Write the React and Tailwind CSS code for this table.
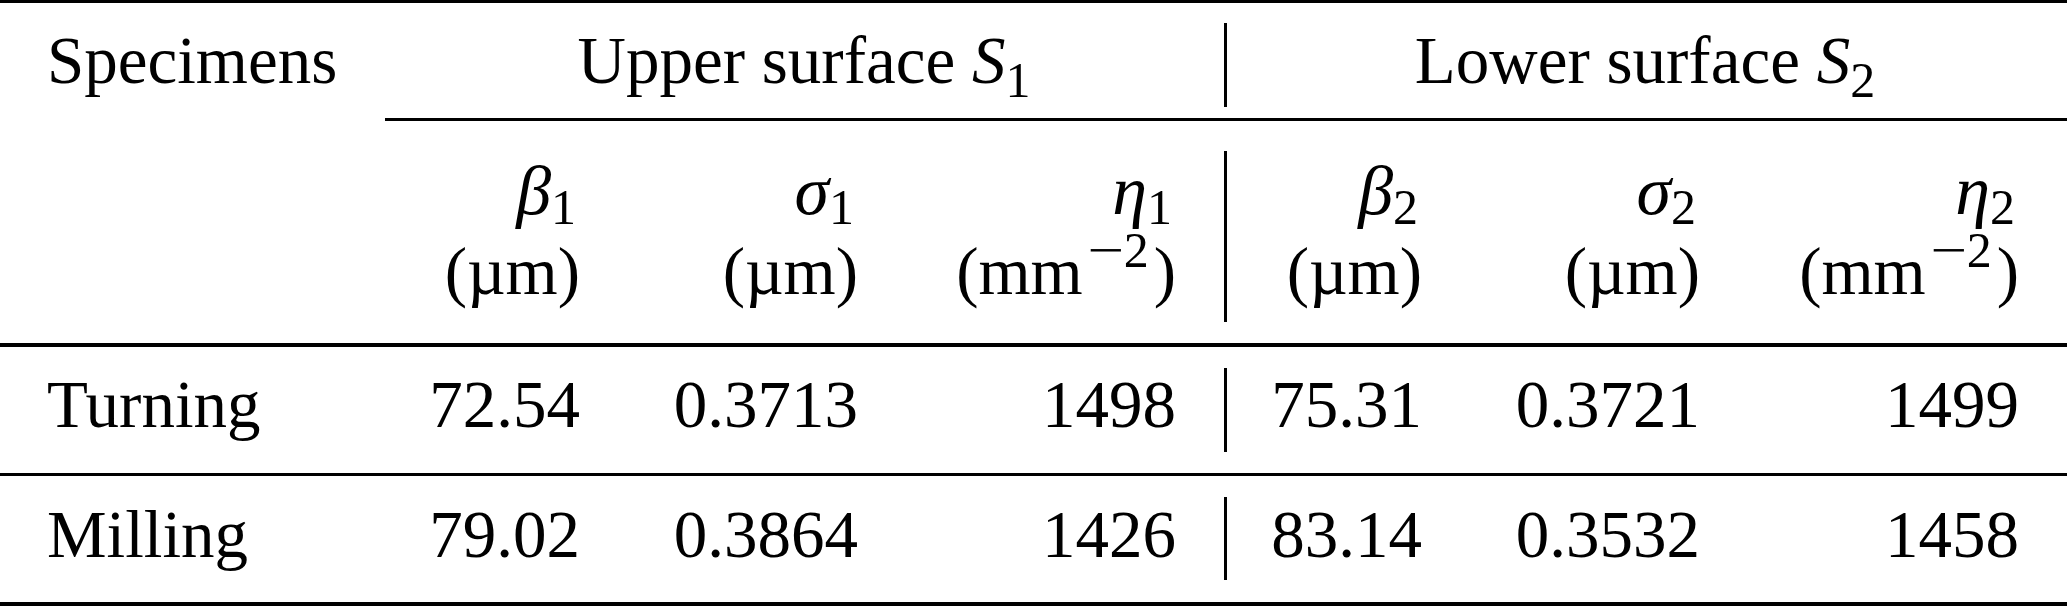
const grid = "grid grid-cols-[388px_240px_278px_318px_3px_243px_278px_319px]";

function Sub({ children, drop = "top-[10px]" }) {
  return <span className={`relative ${drop} pr-[4px] text-[50px] leading-none not-italic`}>{children}</span>;
}

function Sym({ g, i }) {
  return (
    <span>
      <i className="text-[70px] leading-none">{g}</i>
      <Sub>{i}</Sub>
    </span>
  );
}

function Unit({ g, i, unit }) {
  return (
    <div className="pt-[30px] pr-12 text-right leading-[80px]">
      <div>
        <Sym g={g} i={i} />
      </div>
      <div>{unit}</div>
    </div>
  );
}

const um = "(µm)";
// math minus is wider than the text one
const mm = (
  <span>
    (mm
    <span className="relative -top-[27px] pl-[4px] pr-[5px] text-[50px] leading-none">
      <span className="inline-block w-[37px] scale-x-[1.3] text-center">−</span>2
    </span>
    )
  </span>
);

function DataRow({ name, values, pt, barTop, barH }) {
  return (
    <div className={`${grid} h-[126px] leading-[80px]`}>
      <div className={`${pt} pl-[47px]`}>{name}</div>
      {values.slice(0, 3).map((v) => (
        <div key={v} className={`${pt} pr-12 text-right`}>{v}</div>
      ))}
      <div className={`${barTop} ${barH} bg-black`} />
      {values.slice(3).map((v) => (
        <div key={v} className={`${pt} pr-12 text-right`}>{v}</div>
      ))}
    </div>
  );
}

export default function App() {
  return (
    <div className="w-[2067px] h-[606px] bg-white font-['Liberation_Serif',serif] text-[67px] text-black">
      <div className="h-[3px] bg-black" />

      <div className={`${grid} h-[115px] leading-[80px]`}>
        <div className="pt-[17px] pl-[47px]">Specimens</div>
        <div className="col-span-3 pt-[17px] text-center">
          Upper surface <i>S</i>
          <Sub drop="top-[14px]">1</Sub>
        </div>
        <div className="mt-[20px] h-[84px] bg-black" />
        <div className="col-span-3 pt-[17px] text-center">
          Lower surface <i>S</i>
          <Sub drop="top-[14px]">2</Sub>
        </div>
      </div>

      <div className="ml-[385px] h-[3px] bg-black" />

      <div className={`${grid} h-[222px]`}>
        <div />
        <Unit g="β" i="1" unit={um} />
        <Unit g="σ" i="1" unit={um} />
        <Unit g="η" i="1" unit={mm} />
        <div className="mt-[30px] h-[171px] bg-black" />
        <Unit g="β" i="2" unit={um} />
        <Unit g="σ" i="2" unit={um} />
        <Unit g="η" i="2" unit={mm} />
      </div>

      <div className="h-[4px] bg-black" />

      <DataRow
        name="Turning"
        values={["72.54", "0.3713", "1498", "75.31", "0.3721", "1499"]}
        pt="pt-[17px]"
        barTop="mt-[21px]"
        barH="h-[84px]"
      />

      <div className="h-[3px] bg-black" />

      <DataRow
        name="Milling"
        values={["79.02", "0.3864", "1426", "83.14", "0.3532", "1458"]}
        pt="pt-[18px]"
        barTop="mt-[21px]"
        barH="h-[83px]"
      />

      <div className="h-[4px] bg-black" />
    </div>
  );
}
